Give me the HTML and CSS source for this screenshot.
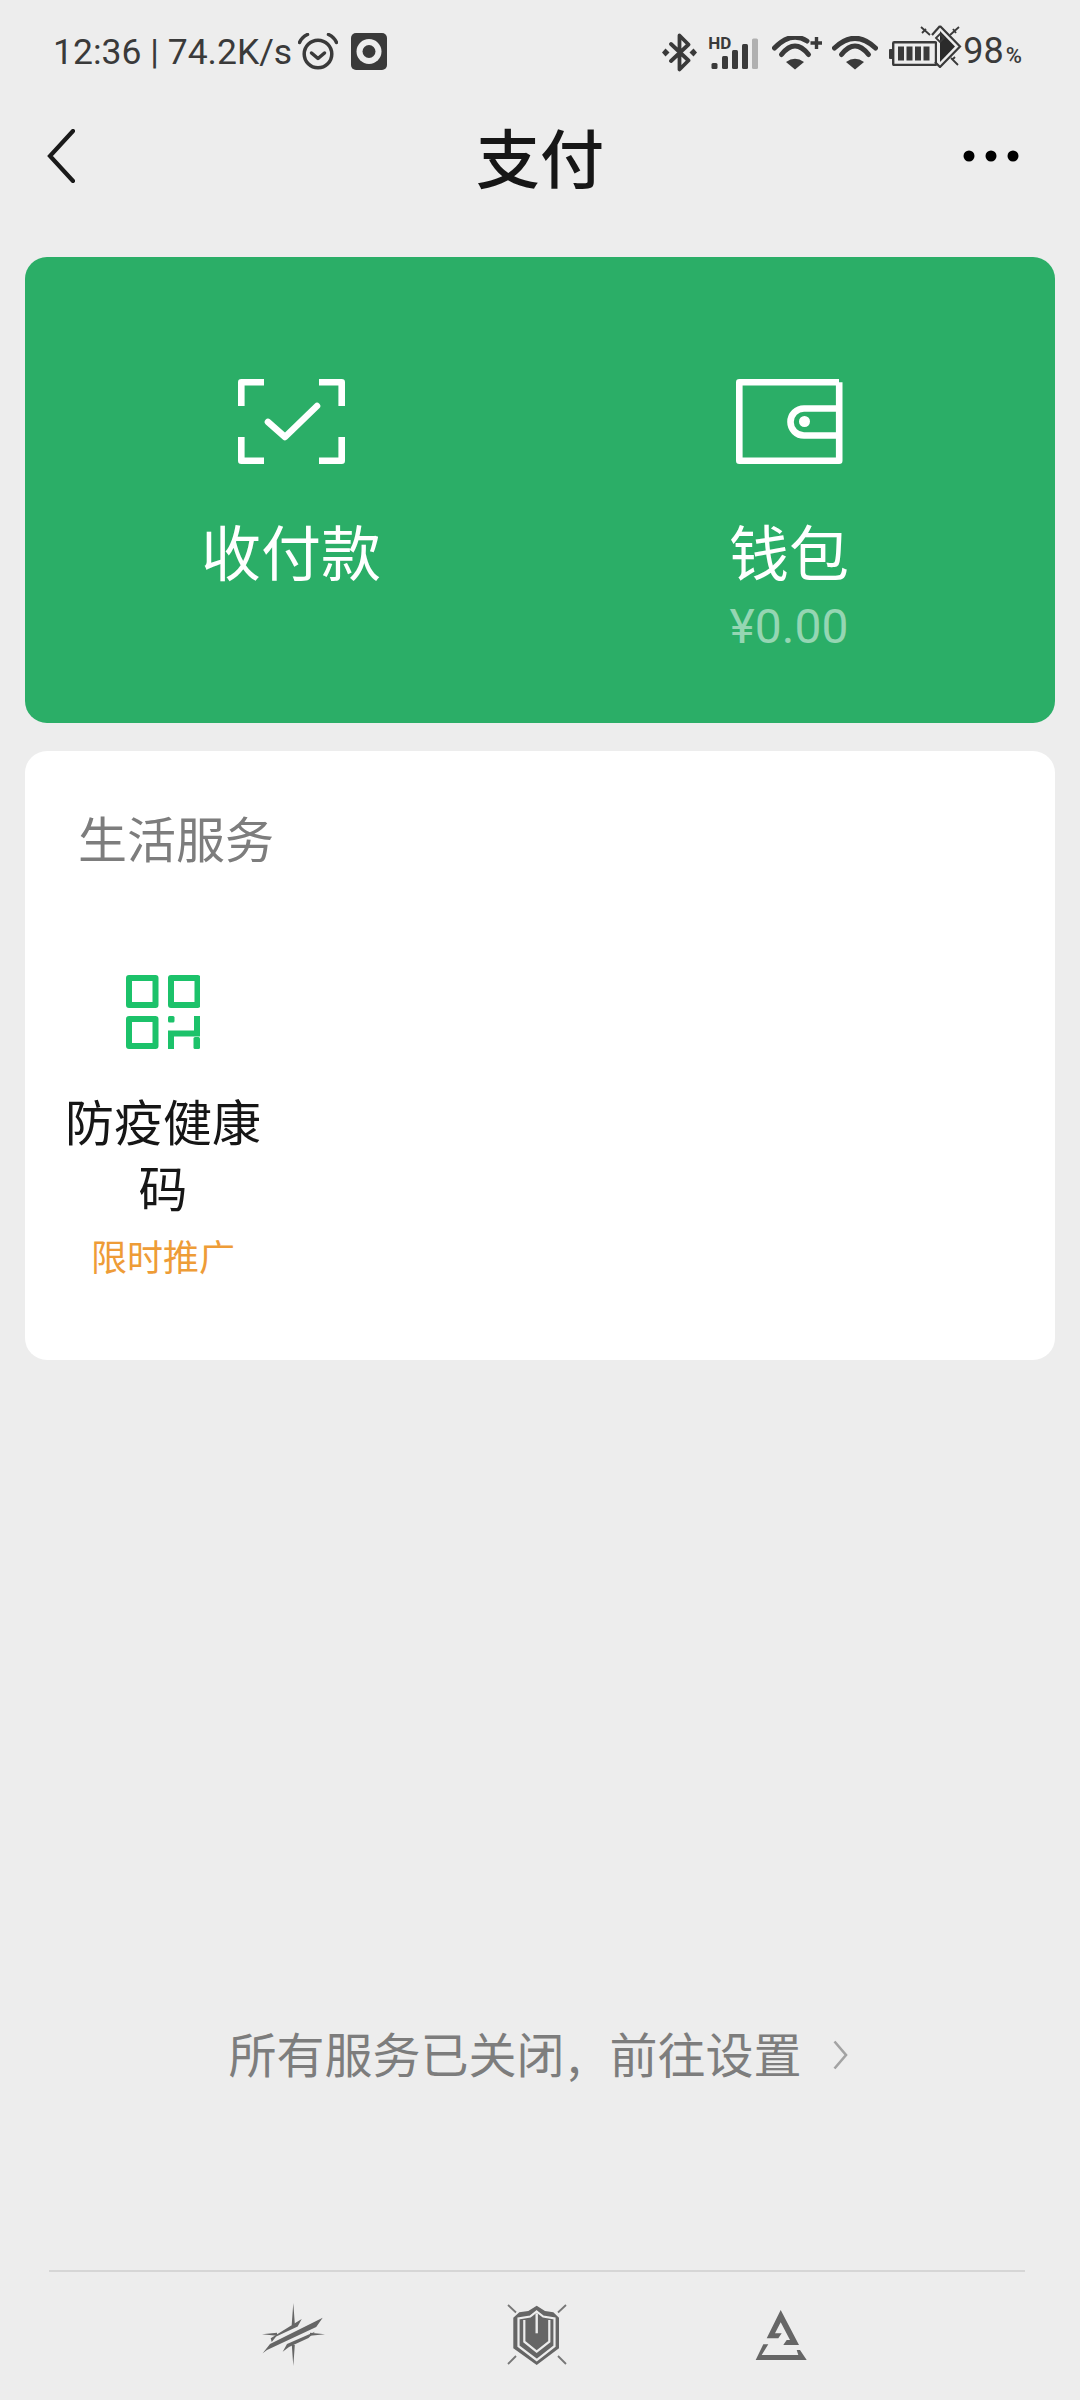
FILE: index.html
```html
<!DOCTYPE html>
<html lang="zh">
<head>
<meta charset="utf-8">
<title>支付</title>
<link rel="stylesheet" href="styles.css">
</head>
<body>
<div class="page">
  <header class="status">
    <div class="status-left">
      <span class="status-text">12:36 | 74.2K/s</span>
      <svg class="ic-alarm" viewBox="0 0 40 37"><circle cx="20" cy="21" r="13.8" fill="none" stroke="#3a3a3a" stroke-width="3.5"/><path d="M13.5 20l6.500 5.500 6.500-5.500" fill="none" stroke="#3a3a3a" stroke-width="3.500" stroke-linecap="round" stroke-linejoin="round"/><path d="M1.500 9.500Q4 4 9.500 1.500M38.500 9.500Q36 4 30.500 1.500" fill="none" stroke="#3a3a3a" stroke-width="3.500" stroke-linecap="round"/></svg>
      <svg class="ic-rec" viewBox="0 0 36 37"><rect width="36" height="37" rx="5" fill="#3a3a3a"/><circle cx="18" cy="18.500" r="12.500" fill="#ededed"/><circle cx="18" cy="18.500" r="6.500" fill="#3a3a3a"/></svg>
    </div>
    <div class="status-right">
      <svg class="ic-bt" viewBox="0 0 35 39"><path d="M9 11l17.500 16.500-9 9V2.500l9 9L9 28" fill="none" stroke="#3a3a3a" stroke-width="3.800" stroke-linejoin="round" stroke-linecap="round"/><path d="M3.500 15.500l4 4-4 4-3.500-4zM31.500 15.500l3.500 4-3.500 4-4-4z" fill="#3a3a3a"/></svg>
      <div class="sig">
        <svg class="ic-sig" viewBox="0 0 50 33"><rect x="3.500" y="27" width="6" height="6" rx="1.500" fill="#3a3a3a"/><rect x="14" y="20" width="6" height="13" rx="1.500" fill="#3a3a3a"/><rect x="24" y="14" width="6" height="19" rx="1.500" fill="#3a3a3a"/><rect x="34" y="8" width="6" height="25" rx="1.500" fill="#3a3a3a"/><rect x="44" y="2.500" width="6" height="30.500" rx="1.500" fill="#b0b0b0"/></svg>
        <span class="hd">HD</span>
      </div>
      <svg class="ic-wifiplus" viewBox="0 0 50 34"><g fill="none" stroke="#3a3a3a" stroke-width="5" stroke-linecap="round"><path d="M2.500 12Q19-5 35 5"/><path d="M9.500 18.500Q23 1.500 36.500 18.500"/></g><path d="M14 26Q23 19.500 32 26L23 33.500z" fill="#3a3a3a"/><path d="M44.500 1v12M38.500 7h12" stroke="#3a3a3a" stroke-width="3.400" fill="none"/></svg>
      <svg class="ic-wifi" viewBox="0 0 46 34"><g fill="none" stroke="#3a3a3a" stroke-width="5" stroke-linecap="round"><path d="M2.500 12Q23-7.400 43.500 12"/><path d="M9.500 18.500Q23 1.500 36.500 18.500"/></g><path d="M14 26Q23 19.500 32 26L23 33.500z" fill="#3a3a3a"/></svg>
      <div class="batt">
        <svg class="ic-batt" viewBox="0 0 48 25"><rect x="0" y="8" width="4" height="10" rx="1" fill="#3a3a3a"/><rect x="4.200" y="1.200" width="42.800" height="22.800" fill="none" stroke="#3a3a3a" stroke-width="2.400" rx="1"/><rect x="9" y="5.500" width="6" height="14" fill="#3a3a3a"/><rect x="17.500" y="5.500" width="6" height="14" fill="#3a3a3a"/><rect x="26" y="5.500" width="6" height="14" fill="#3a3a3a"/><rect x="34.500" y="5.500" width="6" height="14" fill="#3a3a3a"/></svg>
        <svg class="ic-diamond" viewBox="0 0 42 44"><path d="M20 2L40 22.500 20 43l-5-5" fill="none" stroke="#3a3a3a" stroke-width="2.200"/><path d="M12 11L20 2" fill="none" stroke="#3a3a3a" stroke-width="2.200"/><path d="M20 7l15 15.500L20 38z" fill="#2b2b2b"/><path d="M16 14l4-4 4 4-4 4z" fill="none" stroke="#3a3a3a" stroke-width="1.800"/><path d="M1 3l9 8M2 9l4-4M39 3l-9 8M36 9l-3-4M38 41l-7-7M35 33l-3 3" fill="none" stroke="#3a3a3a" stroke-width="1.800"/></svg>
      </div>
      <span class="status-pct">98<small class="pct">%</small></span>
    </div>
  </header>

  <nav class="nav">
    <svg class="ic-back" viewBox="0 0 28 54"><path d="M26 2L3 27l23 25" fill="none" stroke="#1a1a1a" stroke-width="4.200" stroke-linecap="round" stroke-linejoin="miter"/></svg>
    <h1 class="nav-title">支付</h1>
    <svg class="ic-more" viewBox="0 0 56 12"><circle cx="6" cy="6" r="5.500"/><circle cx="28" cy="6" r="5.500"/><circle cx="50" cy="6" r="5.500"/></svg>
  </nav>

  <section class="pay-card">
    <div class="pay-item">
      <svg class="pay-icon" viewBox="0 0 107 85"><path d="M26 3.300H3.300V27M81 3.300h22.700V27M26 81.700H3.300V58M81 81.700h22.700V58" fill="none" stroke="#fff" stroke-width="6.600" stroke-linejoin="round"/><path d="M30 43l17 15 32-31" fill="none" stroke="#fff" stroke-width="6.600" stroke-linecap="round" stroke-linejoin="round"/></svg>
      <div class="pay-label">收付款</div>
    </div>
    <div class="pay-item">
      <svg class="pay-icon" viewBox="0 0 107 85"><path d="M103 3.300H3.300v78.400h99.900V3.300" fill="none" stroke="#fff" stroke-width="6.600" stroke-linejoin="round"/><path d="M103 29.500H68a13.500 13.500 0 0 0 0 27h35" fill="none" stroke="#fff" stroke-width="6.600"/><circle cx="68.500" cy="42.500" r="5.500" fill="#fff"/></svg>
      <div class="pay-label">钱包</div>
      <div class="pay-sub">¥0.00</div>
    </div>
  </section>

  <section class="svc-card">
    <h2 class="svc-title">生活服务</h2>
    <div class="svc-item">
      <svg class="svc-icon" viewBox="0 0 74 74"><g fill="none" stroke="#1cc26a" stroke-width="6" stroke-linejoin="round"><rect x="3" y="3" width="26.500" height="27"/><rect x="45" y="3" width="26.500" height="27"/><rect x="3" y="44" width="26.500" height="27"/></g><rect x="42" y="41" width="6.500" height="6.500" rx="1.500" fill="#1cc26a"/><path d="M45 74V58.500h26V41" fill="none" stroke="#1cc26a" stroke-width="6"/><rect x="67.500" y="62" width="6.500" height="12" rx="1.500" fill="#1cc26a"/></svg>
      <div class="svc-name">防疫健康码</div>
      <div class="svc-tag">限时推广</div>
    </div>
  </section>

  <a class="settings-link">
    <span>所有服务已关闭<span class="comma">,</span>前往设置</span>
    <svg class="ic-chev" viewBox="0 0 15 30"><path d="M1.500 1.500L13 15 1.500 28.500" fill="none" stroke="#a3a3a3" stroke-width="2.600"/></svg>
  </a>

  <footer class="tabs">
    <svg class="tab-claw" viewBox="0 0 63 64"><path d="M31.300 0l1.600 22h-3.200zM29.800 42h3l-1.500 21zM0 31.300l15-1.500v3zM63 31.300l-15-1.500v3z" fill="#666"/><path d="M8.700 35.300L39.700 16l-4 7.500-21.500 10-4.500 5.500z" fill="#666"/><path d="M.7 50.300L8 41l52.700-26.300-6.500 9.300L5 47z" fill="#666"/><path d="M20.700 48.700L25 41l28-12.300-6.500 6.300L27 44z" fill="#666"/></svg>
    <svg class="tab-shield" viewBox="0 0 60 64"><path d="M29.700 1.700L38 7l8.300 1.300 5.700 5.400v30.600L29.700 61 6.300 44.300V13.700l6-5.400L21.300 7z" fill="#666"/><path d="M29.700 7.500l6.500 5 11.300 2v27.700L29.700 56 11.500 42.200V14.500l11.700-2z" fill="none" stroke="#ededed" stroke-width="2.200"/><path d="M17.300 16v21.700l12.400 10 12.600-10V16" fill="none" stroke="#ededed" stroke-width="2.200"/><path d="M28.500 9.300h2.400v20h-2.400z" fill="#ededed"/><path d="M1 1l8 7.500M59 1l-8 7.500M1 60l8-8M59 60l-8-8" stroke="#777" stroke-width="1.800"/></svg>
    <svg class="tab-tri" viewBox="0 0 52 52"><path d="M25.700 1L44 36H28.300l3.400-5H35L25.700 13.300 20 24.300h6.700l-3.400 5H11.700z" fill="#666"/><path d="M.7 51L8.300 35.300h5L6.700 46h36.600l-1.600-5H45l6.700 10z" fill="#666"/></svg>
  </footer>
</div>
</body>
</html>
```

FILE: styles.css
```css
* { box-sizing: border-box; }
html, body { margin: 0; padding: 0; }
body {
  background: #ededed;
  font-family: "Noto Sans CJK SC", "Noto Sans", sans-serif;
  color: #111;
}
.page {
  width: 1080px;
  height: 2400px;
  display: flex;
  flex-direction: column;
  overflow: hidden;
}
.page > * { flex: none; }
svg { display: block; flex: none; }

.status {
  height: 104px;
  padding: 28px 58px 0 53px;
  display: flex;
  justify-content: space-between;
  align-items: flex-start;
}
.status-left, .status-right { display: flex; align-items: center; height: 48px; }
.status-text {
  font-family: Roboto, sans-serif;
  font-size: 35.500px;
  line-height: 48px;
  color: #3a3a3a;
  white-space: pre;
}
.ic-alarm { width: 40px; height: 37px; margin-left: 6px; margin-top: -2px; }
.ic-rec { width: 36px; height: 37px; margin-left: 13px; margin-top: -2px; }
.ic-bt { width: 35px; height: 39px; }
.sig { position: relative; width: 50px; height: 33px; margin-left: 11px; }
.ic-sig { width: 50px; height: 33px; }
.hd {
  position: absolute;
  left: 0;
  top: 0;
  font-family: Roboto, sans-serif;
  font-weight: 700;
  font-size: 17px;
  line-height: 14px;
  color: #3a3a3a;
}
.ic-wifiplus { width: 50px; height: 34px; margin-left: 14px; margin-top: 2px; }
.ic-wifi { width: 46px; height: 34px; margin-left: 10px; margin-top: 2px; }
.batt { position: relative; width: 48px; height: 25px; margin-left: 11px; margin-top: 3px; }
.ic-batt { width: 48px; height: 25px; }
.ic-diamond { position: absolute; left: 31px; top: -17px; width: 42px; height: 44px; }
.status-pct {
  font-family: Roboto, sans-serif;
  font-size: 36px;
  line-height: 48px;
  color: #3a3a3a;
  margin-left: 26px;
  margin-top: 3px;
  white-space: nowrap;
}
.pct { font-size: 22px; margin-left: 2px; font-weight: 500; }

.nav {
  height: 153px;
  padding: 0 61px 0 47px;
  display: flex;
  align-items: center;
  justify-content: space-between;
  position: relative;
}
.ic-back { width: 28px; height: 54px; margin-top: -49px; }
.ic-more { width: 56px; height: 12px; margin-top: -49px; fill: #000; }
.nav-title {
  margin: -52px 0 0;
  font-size: 64px;
  line-height: 80px;
  font-weight: 500;
  color: #161616;
  position: absolute;
  left: 0;
  right: 0;
  text-align: center;
}

.pay-card {
  margin: 0 25px;
  height: 466px;
  background: #2bae67;
  border-radius: 22px;
  padding: 122px 17px 0;
  display: grid;
  grid-template-columns: 1fr 1fr;
  color: #fff;
}
.pay-item { display: flex; flex-direction: column; align-items: center; }
.pay-icon { width: 107px; height: 85px; }
.pay-label { font-size: 60px; line-height: 80px; margin-top: 46px; }
.pay-sub {
  font-family: Roboto, sans-serif;
  font-size: 48px;
  line-height: 56px;
  margin-top: 9px;
  color: #95d6b3;
}

.svc-card {
  margin: 28px 25px 0;
  height: 609px;
  background: #fff;
  border-radius: 22px;
  padding: 54px 0 0 53px;
}
.svc-title {
  margin: 0;
  font-size: 49px;
  line-height: 64px;
  font-weight: 400;
  color: #7d7d7d;
}
.svc-item {
  margin: 106px 0 0 -21px;
  width: 212px;
  display: flex;
  flex-direction: column;
  align-items: center;
  text-align: center;
}
.svc-icon { width: 74px; height: 74px; }
.svc-name { font-size: 49px; line-height: 66px; margin-top: 38px; color: #161616; }
.svc-tag { font-size: 36px; line-height: 48px; margin-top: 12px; color: #ee9c37; }

.settings-link {
  margin-top: 660px;
  padding-right: 4px;
  display: flex;
  justify-content: center;
  align-items: center;
  gap: 31px;
  font-size: 48px;
  line-height: 64px;
  color: #7d7d7d;
}
.comma { display: inline-block; width: 45px; padding-left: 3px; }
.ic-chev { width: 15px; height: 30px; margin-top: 6px; }

.tabs {
  margin: 186px 55px 0 49px;
  height: 130px;
  border-top: 2px solid #d6d6d6;
  display: flex;
  justify-content: center;
  align-items: flex-start;
  gap: 185px;
  padding: 31px 5px 0 0;
}
.tab-claw { width: 63px; height: 64px; }
.tab-shield { width: 60px; height: 64px; margin: 1px 3px 0 -3px; }
.tab-tri { width: 52px; height: 52px; margin-top: 6px; }
```
